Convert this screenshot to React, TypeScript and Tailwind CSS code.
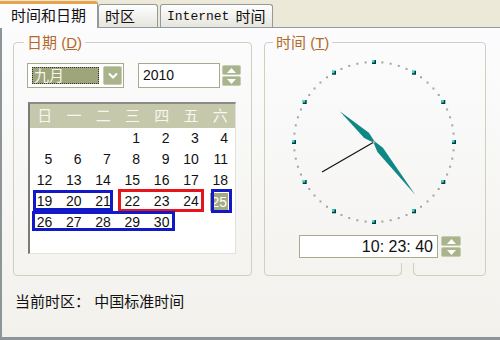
const days: (number | null)[] = [
  null, null, null, 1, 2, 3, 4,
  5, 6, 7, 8, 9, 10, 11,
  12, 13, 14, 15, 16, 17, 18,
  19, 20, 21, 22, 23, 24, 25,
  26, 27, 28, 29, 30, null, null,
  null, null, null, null, null, null, null,
];

const weekNames = ["日", "一", "二", "三", "四", "五", "六"];

const handPoints = (deg: number, len: number, at: number, half: number, back: number) => {
  const a = (deg * Math.PI) / 180;
  const ux = Math.sin(a);
  const uy = -Math.cos(a);
  const px = Math.cos(a);
  const py = Math.sin(a);
  const pts = [
    [-back * ux, -back * uy],
    [at * ux + half * px, at * uy + half * py],
    [len * ux, len * uy],
    [at * ux - half * px, at * uy - half * py],
  ];
  return pts.map(([x, y]) => `${(90 + x).toFixed(1)},${(90 + y).toFixed(1)}`).join(" ");
};

function Clock() {
  const ticks = [];
  for (let i = 0; i < 60; i++) {
    const a = (i * 6 * Math.PI) / 180;
    const x = 90 + 80 * Math.sin(a);
    const y = 90 - 80 * Math.cos(a);
    if (i % 5 === 0) {
      ticks.push(
        <g key={i}>
          <rect x={x - 2} y={y - 2} width={4} height={4} fill="#0b3b3b" />
          <rect x={x - 2} y={y - 2} width={2.5} height={2.5} fill="#2ee0dc" />
        </g>
      );
    } else {
      ticks.push(<rect key={i} x={x - 1} y={y - 1} width={2} height={2} fill="#a3a3a0" />);
    }
  }
  const s = (240 * Math.PI) / 180;
  return (
    <svg width="180" height="180" viewBox="0 0 180 180">
      {ticks}
      <polygon points={handPoints(142, 67, 10, 3.5, 3)} fill="#0f8784" />
      <polygon points={handPoints(312, 46, 10, 3.5, 3)} fill="#0f8784" />
      <line x1={90} y1={90} x2={90 + 60 * Math.sin(s)} y2={90 - 60 * Math.cos(s)} stroke="#111" strokeWidth={1.2} />
      <circle cx={90} cy={90} r={1.5} fill="#9aa" />
    </svg>
  );
}

function Spinner({ className }: { className: string }) {
  return (
    <div className={`flex flex-col gap-px ${className}`}>
      <div className="flex-1 rounded-[2px] bg-[#a9b38c] border border-[#c6cdb0] flex items-center justify-center">
        <svg width="9" height="5" viewBox="0 0 9 5"><polygon points="0,5 4.5,0 9,5" fill="#fff" /></svg>
      </div>
      <div className="flex-1 rounded-[2px] bg-[#a9b38c] border border-[#c6cdb0] flex items-center justify-center">
        <svg width="9" height="5" viewBox="0 0 9 5"><polygon points="0,0 4.5,5 9,0" fill="#fff" /></svg>
      </div>
    </div>
  );
}

export default function App() {
  return (
    <div className="w-[500px] h-[340px] flex flex-col bg-[#ece9d8] overflow-hidden font-['Liberation_Sans','Noto_Sans_CJK_SC',sans-serif] text-[#111]">
      {/* Tabs */}
      <div className="h-[28px] flex items-end border-b border-[#919b9c] relative z-10">
        <div className="w-[98px] h-[27px] -mb-px bg-[#fcfcfe] border-t-[3px] border-t-[#e8a24a] border-r border-[#919b9c] rounded-tr-[3px] flex items-center justify-center text-[15px] leading-none pb-[2px]">
          时间和日期
        </div>
        <div className="w-[60px] h-[23px] bg-linear-to-b from-[#fefefe] to-[#e6e5de] border border-b-0 border-[#919b9c] rounded-t-[3px] flex items-center pl-[6px] text-[15px] leading-none">
          时区
        </div>
        <div className="w-[113px] h-[23px] ml-[2px] bg-linear-to-b from-[#fefefe] to-[#e6e5de] border border-b-0 border-[#919b9c] rounded-t-[3px] flex items-center pl-[6px] text-[15px] leading-none">
          <span className="font-['Liberation_Mono',monospace] text-[13px]">Internet</span>
          <span className="ml-[6px]">时间</span>
        </div>
      </div>

      {/* Page */}
      <div className="flex-1 flex flex-col border-l-2 border-b-[3px] border-[#8d9596] bg-linear-to-b from-[#fcfcfe] to-[#f2f1ec] pt-[14px] pl-[11px]">
        <div className="flex gap-[12px] h-[234px]">
          {/* Date group */}
          <div className="relative w-[239px] h-full border border-[#d0d0bf] rounded-[4px] pt-[20px] pl-[13px]">
            <span className="absolute -top-[10px] left-[10px] px-[3px] bg-[#fbfbfb] text-[15px] leading-[20px] text-[#b4692a]">
              日期 (<span className="underline">D</span>)
            </span>
            <div className="flex items-center h-[25px]">
              <div className="w-[97px] h-[25px] border border-[#a5ac8b] bg-white flex items-center pl-[4px] gap-[4px]">
                <div className="w-[67px] h-[17px] bg-[#9ea57b] outline-1 outline-dotted outline-[#333] -outline-offset-1 text-[15px] leading-[17px] text-[#f4f4ea] pl-[2px]">
                  九月
                </div>
                <div className="w-[19px] h-[19px] rounded-[2px] bg-[#a9b38c] border border-[#c6cdb0] flex items-center justify-center">
                  <svg width="10" height="7" viewBox="0 0 10 7"><polyline points="1,1.5 5,5.5 9,1.5" fill="none" stroke="#fff" strokeWidth="2" /></svg>
                </div>
              </div>
              <div className="ml-[14px] w-[82px] h-[25px] border border-[#a5ac8b] bg-white flex items-center pl-[4px] text-[14px]">
                2010
              </div>
              <Spinner className="ml-[2px] w-[19px] h-[21px]" />
            </div>

            {/* Calendar */}
            <div className="relative mt-[14px] ml-[1px] w-[208px] h-[152px] bg-white border-t-2 border-l-2 border-t-[#8a8a86] border-l-[#7a7a76] border-r border-b border-r-[#e2e1da] border-b-[#e2e1da]">
              <div className="grid grid-cols-7 h-[24px] bg-[#c5c8ab] text-[#f7f7ef] text-[15px] items-center text-center">
                {weekNames.map((w) => (
                  <span key={w}>{w}</span>
                ))}
              </div>
              <div className="grid grid-cols-7 text-[14px]">
                {days.map((d, i) => (
                  <div key={i} className="h-[21px] flex items-center justify-end pr-[7px]">
                    {d === 25 ? (
                      <span className="bg-[#a3a983] text-white leading-[18px] px-px">{d}</span>
                    ) : (
                      d
                    )}
                  </div>
                ))}
              </div>
              <div className="absolute left-[3px] top-[86px] w-[80px] h-[21px] border-[3px] border-[#1219c6]" />
              <div className="absolute left-[88px] top-[85px] w-[86px] h-[23px] border-[3px] border-[#e8141c]" />
              <div className="absolute left-[181px] top-[85px] w-[21px] h-[24px] border-[3px] border-[#1219c6]" />
              <div className="absolute left-[2px] top-[107px] w-[143px] h-[20px] border-[3px] border-[#1219c6]" />
            </div>
          </div>

          {/* Time group */}
          <div className="relative w-[222px] h-full border border-[#d0d0bf] rounded-[4px] pt-[9px]">
            <span className="absolute -top-[10px] left-[8px] px-[3px] bg-[#fbfbfb] text-[15px] leading-[20px] text-[#b4692a]">
              时间 (<span className="underline">T</span>)
            </span>
            <div className="ml-[19px]">
              <Clock />
            </div>
            <div className="flex items-center ml-[34px] mt-[3px]">
              <div className="w-[139px] h-[23px] border border-[#a5ac8b] bg-white flex items-center justify-end pr-[4px] text-[16px]">
                10: 23: 40
              </div>
              <Spinner className="ml-[3px] w-[20px] h-[21px]" />
            </div>
            <div className="absolute -bottom-[1px] left-[134px] w-[17px] h-[13px] bg-[#f3f2ed] flex justify-between">
              <div className="w-[3px] h-[12px] border-r border-b border-[#d0d0bf] rounded-br-[4px]" />
              <div className="w-[3px] h-[12px] border-l border-b border-[#d0d0bf] rounded-bl-[4px]" />
            </div>
          </div>
        </div>

        <div className="mt-[16px] pl-[2px] text-[15px] leading-[20px]">当前时区：&nbsp;中国标准时间</div>
      </div>
    </div>
  );
}
